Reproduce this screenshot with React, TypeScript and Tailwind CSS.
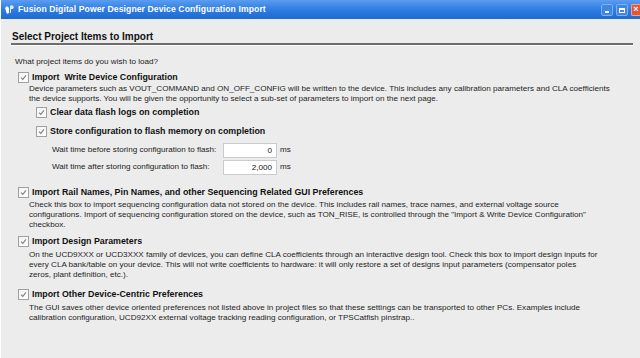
import React from "react";

const font = { fontFamily: '"Liberation Sans", Arial, sans-serif' };

function Check() {
  return (
    <span className="w-[11px] h-[11px] shrink-0 border border-[#a0a0a0] bg-gradient-to-br from-[#f2f2f2] to-[#ffffff] flex items-center justify-center">
      <svg width="7" height="7" viewBox="0 0 7 7">
        <path d="M1 3.6 L2.8 5.4 L6 1.4" fill="none" stroke="#808080" strokeWidth="1.1" />
      </svg>
    </span>
  );
}

function CheckRow({ label, className }: { label: string; className?: string }) {
  return (
    <div className={`flex items-center h-[12px] gap-[3px] ${className ?? ""}`}>
      <Check />
      <span className="font-bold text-[8.85px] leading-[12px] text-[#111] whitespace-pre">{label}</span>
    </div>
  );
}

function Desc({ lines, className }: { lines: string[]; className?: string }) {
  return (
    <div className={`pl-[28px] text-[8.1px] leading-[10px] text-[#1e1e1e] ${className ?? ""}`}>
      {lines.map((l, i) => (
        <div key={i} className="whitespace-nowrap">{l}</div>
      ))}
    </div>
  );
}

function WaitRow({ label, value, className }: { label: string; value: string; className?: string }) {
  return (
    <div className={`flex items-center h-[15px] pl-[51px] ${className ?? ""}`}>
      <span className="w-[171px] text-[8.1px] text-[#222]">{label}</span>
      <div className="w-[54px] h-[15px] bg-white border border-[#c9cbcf] text-right pr-[4px] text-[8.1px] leading-[13px] text-[#111]">
        {value}
      </div>
      <span className="ml-[3px] text-[8.1px] text-[#222]">ms</span>
    </div>
  );
}

export default function App() {
  return (
    <div style={font} className="w-[640px] h-[358px] bg-[#ececec] flex flex-col overflow-hidden border-l border-white">
      {/* title bar */}
      <div className="h-[19px] shrink-0 flex items-center bg-gradient-to-b from-[#5b9df0] via-[#2d7de2] to-[#1f69d2] pl-[3px]">
        <svg width="11" height="11" viewBox="0 0 11 11">
          <path d="M1 4 L3 2 L5 4 L5 9 L3 10 Z" fill="#ffffff" />
          <path d="M6 2 L8 1 L10 3 L9 5 L7 5 L7 9 L6 9 Z" fill="#dbe8fb" />
        </svg>
        <span className="ml-[3px] text-white font-bold text-[8.6px] tracking-[0.1px]">
          Fusion Digital Power Designer Device Configuration Import
        </span>
        <div className="ml-auto flex items-center gap-[3px] h-full pt-[1px]">
          <div className="w-[12px] h-[12px] rounded-[2px] bg-[#3f86e6] border border-[#7fb0ee] flex items-end justify-center pb-[2px]">
            <div className="w-[4px] h-[2px] bg-white" />
          </div>
          <div className="w-[12px] h-[12px] rounded-[2px] bg-[#3f86e6] border border-[#7fb0ee] flex items-center justify-center">
            <div className="w-[6px] h-[5px] border border-white border-t-2" />
          </div>
          <div className="w-[9px] h-[12px] rounded-l-[2px] bg-[#e2553a] border border-[#f2a08e] border-r-0 flex items-center justify-center text-white text-[9px] font-bold">
            ×
          </div>
        </div>
      </div>

      {/* content */}
      <div className="pl-[10px] pr-[7px] pt-[12px]">
        <div className="font-bold text-[10px] leading-[12px] text-[#111] pl-[1px]">Select Project Items to Import</div>
        <div className="h-[2px] bg-[#6e6e6e] border-b border-white box-content" />
      </div>

      <div className="pl-[7px] text-[#222]">
        <div className="mt-[11px] pl-[7px] text-[8.1px] leading-[10px]">What project items do you wish to load?</div>

        <div className="pl-[10px] mt-[4px]">
          <CheckRow label="Import  Write Device Configuration" />
        </div>
        <Desc
          className="mt-[1px] -ml-[7px] pl-[28px]"
          lines={[
            "Device parameters such as VOUT_COMMAND and ON_OFF_CONFIG will be written to the device. This includes any calibration parameters and CLA coefficients",
            "the device supports. You will be given the opportunity to select a sub-set of parameters to import on the next page.",
          ]}
        />
        <div className="pl-[28px] mt-[2px]">
          <CheckRow label="Clear data flash logs on completion" />
        </div>
        <div className="pl-[28px] mt-[7px]">
          <CheckRow label="Store configuration to flash memory on completion" />
        </div>
        <div className="-ml-[7px]">
          <WaitRow className="mt-[6px]" label="Wait time before storing configuration to flash:" value="0" />
          <WaitRow className="mt-[2px]" label="Wait time after storing configuration to flash:" value="2,000" />
        </div>

        <div className="pl-[10px] mt-[11px]">
          <CheckRow label="Import Rail Names, Pin Names, and other Sequencing Related GUI Preferences" />
        </div>
        <Desc
          className="mt-[2px] -ml-[7px]"
          lines={[
            "Check this box to import sequencing configuration data not stored on the device. This includes rail names, trace names, and external voltage source",
            "configurations. Import of sequencing configuration stored on the device, such as TON_RISE, is controlled through the \"Import & Write Device Configuration\"",
            "checkbox.",
          ]}
        />

        <div className="pl-[10px] mt-[5px]">
          <CheckRow label="Import Design Parameters" />
        </div>
        <Desc
          className="mt-[3px] -ml-[7px]"
          lines={[
            "On the UCD9XXX or UCD3XXX family of devices, you can define CLA coefficients through an interactive design tool. Check this box to import design inputs for",
            "every CLA bank/table on your device. This will not write coefficients to hardware: it will only restore a set of designs input parameters (compensator poles",
            "zeros, plant definition, etc.).",
          ]}
        />

        <div className="pl-[10px] mt-[8px]">
          <CheckRow label="Import Other Device-Centric Preferences" />
        </div>
        <Desc
          className="mt-[3px] -ml-[7px]"
          lines={[
            "The GUI saves other device oriented preferences not listed above in project files so that these settings can be transported to other PCs. Examples include",
            "calibration configuration, UCD92XX external voltage tracking reading configuration, or TPSCatfish pinstrap..",
          ]}
        />
      </div>
    </div>
  );
}
